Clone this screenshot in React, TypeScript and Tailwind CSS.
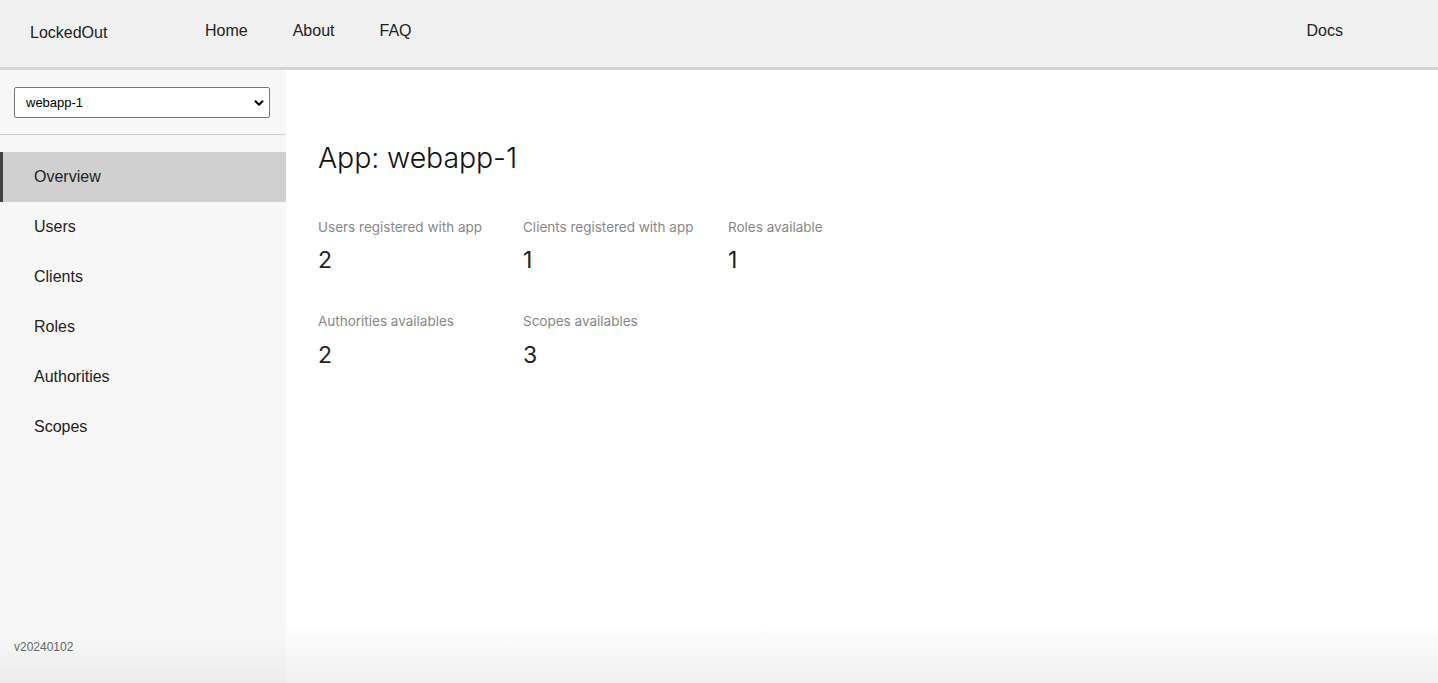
import React from 'react';

const navItems = ['Overview', 'Users', 'Clients', 'Roles', 'Authorities', 'Scopes'];

const stats = [
  { label: 'Users registered with app', value: 2 },
  { label: 'Clients registered with app', value: 1 },
  { label: 'Roles available', value: 1 },
  { label: 'Authorities availables', value: 2 },
  { label: 'Scopes availables', value: 3 },
];

export default function App() {
  return (
    <div className="h-[683px] w-full flex flex-col bg-white overflow-hidden font-['Liberation_Sans',Arial,sans-serif] text-[#222]">
      <header className="h-[70px] shrink-0 bg-[#f0f0f0] border-b-[3px] border-[#d4d4d4] flex items-start">
        <div className="w-[205px] pl-[30px] pt-[21px] text-[16px] text-[#222]">LockedOut</div>
        <nav className="flex gap-[45px] pt-[19px] text-[16px] text-[#222]">
          <a>Home</a>
          <a>About</a>
          <a>FAQ</a>
        </nav>
        <div className="ml-auto pr-[95px] pt-[19px] text-[16px] text-[#222]">Docs</div>
      </header>

      <div className="flex flex-1 min-h-0">
        <aside className="w-[286px] shrink-0 bg-gradient-to-b from-[#f7f7f7] from-[92%] to-[#ececec] flex flex-col">
          <div className="pl-[14px] pr-[16px] pt-[17px] pb-[16px] border-b border-[#cccccc]">
            <div className="h-[31px] bg-white border border-[#767676] rounded-[2px] flex items-center justify-between pl-[11px] pr-[3px] text-[13px] text-black">
              <span>webapp-1</span>
              <svg width="14" height="14" viewBox="0 0 24 24" fill="none" stroke="black" strokeWidth="3.5" strokeLinecap="round" strokeLinejoin="round">
                <path d="M6 9l6 6 6-6" />
              </svg>
            </div>
          </div>
          <ul className="mt-[17px]">
            {navItems.map((item, i) => (
              <li
                key={item}
                className={
                  i === 0
                    ? 'h-[50px] flex items-center pl-[31px] bg-[#d0d0d0] border-l-[3px] border-[#444] text-[16px] text-[#222]'
                    : 'h-[50px] flex items-center pl-[34px] text-[16px] text-[#222]'
                }
              >
                {item}
              </li>
            ))}
          </ul>
          <div className="mt-auto pl-[14px] pb-[27px] text-[12px] text-[#666]">v20240102</div>
        </aside>

        <main className="flex-1 pl-[32px] pt-[74px] bg-gradient-to-b from-white from-[90%] to-[#f0f0f0]">
          <h1 className="text-[28.5px] font-light text-[#111] leading-none font-['Inter',sans-serif] tracking-[-0.1px]">App: webapp-1</h1>
          <div className="grid grid-cols-[205px_205px_205px] gap-y-[43px] mt-[48px] font-['Inter',sans-serif]">
            {stats.map((s) => (
              <div key={s.label}>
                <div className="text-[13.5px] text-[#888] leading-none">{s.label}</div>
                <div className="text-[23px] text-[#222] leading-none mt-[15px]">{s.value}</div>
              </div>
            ))}
          </div>
        </main>
      </div>
    </div>
  );
}
